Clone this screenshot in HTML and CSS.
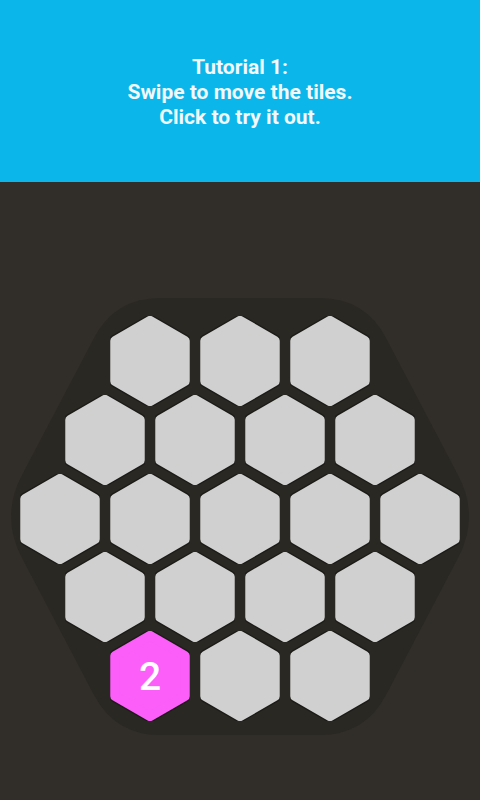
FILE: index.html
```html
<!DOCTYPE html>
<html>
<head>
<meta charset="utf-8">
<link rel="stylesheet" href="styles.css">
</head>
<body>
<svg class="defs" width="0" height="0" aria-hidden="true">
  <symbol id="hex" viewBox="0 0 80 90">
    <polygon points="40,4.6 75,24.8 75,65.2 40,85.4 5,65.2 5,24.8" fill="#1c1b17" stroke="#1c1b17" stroke-width="12" stroke-linejoin="round"/>
    <polygon points="40,4.6 75,24.8 75,65.2 40,85.4 5,65.2 5,24.8" fill="currentColor" stroke="currentColor" stroke-width="9.5" stroke-linejoin="round"/>
  </symbol>
</svg>
<header class="banner">
  <p class="banner-text">Tutorial 1:<br>Swipe to move the tiles.<br>Click to try it out.</p>
</header>
<main class="game">
  <svg class="board" width="480" height="618" viewBox="0 0 480 618">
    <path d="M160,116 L320,116 Q365,116 386,156 L458,293 Q480,334.5 458,376 L386,513 Q365,553 320,553 L160,553 Q115,553 94,513 L22,376 Q0,334.5 22,293 L94,156 Q115,116 160,116 Z"/>
  </svg>
  <div class="grid">
    <div class="row">
      <div class="tile"><svg class="hex"><use href="#hex"/></svg></div>
      <div class="tile"><svg class="hex"><use href="#hex"/></svg></div>
      <div class="tile"><svg class="hex"><use href="#hex"/></svg></div>
    </div>
    <div class="row">
      <div class="tile"><svg class="hex"><use href="#hex"/></svg></div>
      <div class="tile"><svg class="hex"><use href="#hex"/></svg></div>
      <div class="tile"><svg class="hex"><use href="#hex"/></svg></div>
      <div class="tile"><svg class="hex"><use href="#hex"/></svg></div>
    </div>
    <div class="row">
      <div class="tile"><svg class="hex"><use href="#hex"/></svg></div>
      <div class="tile"><svg class="hex"><use href="#hex"/></svg></div>
      <div class="tile"><svg class="hex"><use href="#hex"/></svg></div>
      <div class="tile"><svg class="hex"><use href="#hex"/></svg></div>
      <div class="tile"><svg class="hex"><use href="#hex"/></svg></div>
    </div>
    <div class="row">
      <div class="tile"><svg class="hex"><use href="#hex"/></svg></div>
      <div class="tile"><svg class="hex"><use href="#hex"/></svg></div>
      <div class="tile"><svg class="hex"><use href="#hex"/></svg></div>
      <div class="tile"><svg class="hex"><use href="#hex"/></svg></div>
    </div>
    <div class="row">
      <div class="tile tile-pink"><svg class="hex"><use href="#hex"/></svg><span class="num">2</span></div>
      <div class="tile"><svg class="hex"><use href="#hex"/></svg></div>
      <div class="tile"><svg class="hex"><use href="#hex"/></svg></div>
    </div>
  </div>
</main>
</body>
</html>
```
FILE: styles.css
```css
html, body {
  margin: 0;
  padding: 0;
}
body {
  width: 480px;
  height: 800px;
  overflow: hidden;
  background: #312e29;
  font-family: Roboto, "Liberation Sans", sans-serif;
}
.defs {
  position: absolute;
  width: 0;
  height: 0;
}
.banner {
  height: 182px;
  background: #0bb6ea;
  display: flex;
  align-items: center;
  justify-content: center;
}
.banner-text {
  margin: 0;
  padding-top: 2px;
  color: #f3f8fb;
  font-weight: 700;
  font-size: 21px;
  line-height: 25px;
  text-align: center;
}
.game {
  position: relative;
  height: 618px;
}
.board {
  position: absolute;
  left: 0;
  top: 0;
}
.board path {
  fill: #2a2823;
}
.grid {
  position: relative;
  padding-top: 134px;
  display: flex;
  flex-direction: column;
  align-items: center;
}
.row {
  display: flex;
  gap: 10px;
}
.row + .row {
  margin-top: -11.2px;
}
.tile {
  width: 80px;
  height: 90px;
  display: grid;
  place-items: center;
  color: #d0d0d0;
}
.tile > * {
  grid-area: 1 / 1;
}
.hex {
  width: 80px;
  height: 90px;
  overflow: visible;
}
.tile-pink {
  color: #fb5ef9;
}
.num {
  color: #ffffff;
  font-size: 39px;
  font-weight: 500;
  line-height: 1;
  margin-top: 2px;
}
```
